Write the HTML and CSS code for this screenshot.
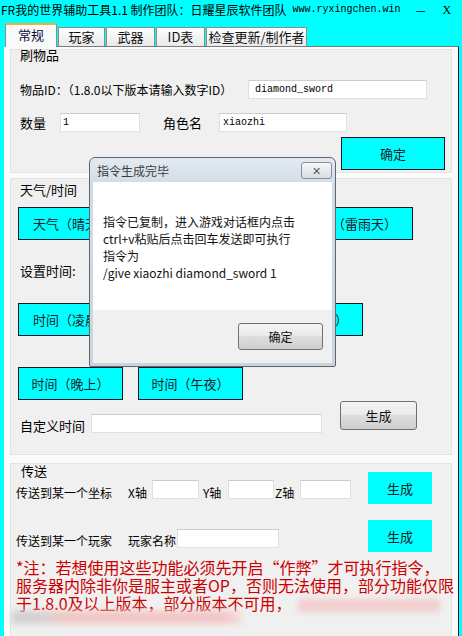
FILE: index.html
```html
<!DOCTYPE html>
<html lang="zh-CN">
<head>
    <meta charset="UTF-8">
    <meta name="viewport" content="width=device-width, initial-scale=1.0">
    <title>FR我的世界辅助工具1.1</title>
    <link rel="stylesheet" href="styles.css">
</head>
<body>
    <div class="titlebar">
        <span class="app-title">FR我的世界辅助工具1.1 制作团队：日耀星辰软件团队</span>
        <span class="site">www.ryxingchen.win</span>
        <span class="win-min">—</span>
        <span class="win-close">X</span>
    </div>

    <div class="tabs">
        <div class="tab active">常规</div>
        <div class="tab tab-player">玩家</div>
        <div class="tab tab-weapon">武器</div>
        <div class="tab tab-id">ID表</div>
        <div class="tab tab-update">检查更新/制作者</div>
    </div>

    <div class="page">
        <!-- 刷物品 -->
        <div class="group group-item">
            <div class="glabel">刷物品</div>
            <div class="row row-id">
                <span class="lbl lbl-id">物品ID：（1.8.0以下版本请输入数字ID）</span>
                <div class="field field-id">diamond_sword</div>
            </div>
            <div class="row row-qty">
                <span class="lbl lbl-qty">数量</span>
                <div class="field field-qty">1</div>
                <span class="lbl lbl-role">角色名</span>
                <div class="field field-role">xiaozhi</div>
            </div>
            <div class="row row-ok">
                <div class="cbtn btn-ok">确定</div>
            </div>
        </div>

        <!-- 天气/时间 (部分按钮被弹窗挡住, 只写出露在外面的字) -->
        <div class="group group-time">
            <div class="glabel glabel-time">天气/时间</div>
            <div class="row row-weather">
                <div class="cbtn btn-w1"><span class="part-left">天气（晴天</span></div>
                <div class="cbtn btn-w2"></div>
                <div class="cbtn btn-w3"><span class="part-right">气（雷雨天）</span></div>
            </div>
            <div class="glabel glabel-set">设置时间:</div>
            <div class="row row-time1">
                <div class="cbtn btn-t"><span class="part-left">时间（凌晨</span></div>
                <div class="cbtn btn-t"></div>
                <div class="cbtn btn-t"><span class="part-right part-paren">）</span></div>
            </div>
            <div class="row row-time2">
                <div class="cbtn btn-t">时间（晚上）</div>
                <div class="cbtn btn-t">时间（午夜）</div>
            </div>
            <div class="row row-custom">
                <div class="custom-left">
                    <span class="lbl lbl-custom">自定义时间</span>
                    <div class="field field-custom"></div>
                </div>
                <div class="gbtn btn-gen">生成</div>
            </div>
        </div>

        <!-- 传送 -->
        <div class="group group-tp">
            <div class="glabel glabel-tp">传送</div>
            <div class="row row-xyz">
                <span class="lbl lbl-tp">传送到某一个坐标</span>
                <span class="lbl lbl-axis">X轴</span>
                <div class="field field-x"></div>
                <span class="lbl lbl-axis lbl-y">Y轴</span>
                <div class="field field-y"></div>
                <span class="lbl lbl-axis lbl-z">Z轴</span>
                <div class="field field-z"></div>
                <div class="fbtn btn-tp1">生成</div>
            </div>
            <div class="row row-player">
                <span class="lbl lbl-tp">传送到某一个玩家</span>
                <span class="lbl lbl-pname">玩家名称</span>
                <div class="field field-pname"></div>
                <div class="fbtn btn-tp2">生成</div>
            </div>
            <div class="note">
                <div class="note-line">*注：若想使用这些功能必须先开启“作弊”才可执行指令，</div>
                <div class="note-line">服务器内除非你是服主或者OP，否则无法使用，部分功能仅限</div>
                <div class="note-line">于1.8.0及以上版本，部分版本不可用，<span class="smudge"></span></div>
                <div class="smudge smudge-2"></div>
            </div>
        </div>
    </div>

    <!-- 弹出的提示框 -->
    <div class="dialog">
        <div class="dlg-title">
            <span>指令生成完毕</span>
            <div class="dlg-close">✕</div>
        </div>
        <div class="dlg-body">
            指令已复制，进入游戏对话框内点击<br>
            ctrl+v粘贴后点击回车发送即可执行<br>
            指令为<br>
            /give xiaozhi diamond_sword 1
        </div>
        <div class="dlg-foot">
            <div class="gbtn btn-dlg">确定</div>
        </div>
    </div>
</body>
</html>
```

FILE: styles.css
```css
* {
    box-sizing: border-box;
}
body {
    margin: 0;
    width: 462px;
    height: 636px;
    overflow: hidden;
    position: relative;
    background: #00ffff;
    font-family: "Noto Sans CJK SC", sans-serif;
    font-size: 12px;
    color: #000;
}

/* title bar */
.titlebar {
    height: 19px;
    display: flex;
    align-items: center;
    white-space: nowrap;
    line-height: 14px;
}
.app-title {
    margin-left: 1px;
}
.site {
    margin-left: 6px;
    font-family: "Liberation Mono", monospace;
    font-size: 10px;
}
.win-min {
    margin-left: 15px;
    font-size: 11px;
}
.win-close {
    margin-left: 17px;
    font-family: "Liberation Serif", serif;
    font-size: 12px;
}

/* tabs */
.tabs {
    height: 27px;
    display: flex;
    align-items: flex-end;
    padding-left: 5px;
}
.tab {
    height: 19px;
    line-height: 18px;
    text-align: center;
    border: 1px solid #8c8c8c;
    border-bottom: none;
    background: linear-gradient(#fefefe, #e9e9e9);
    margin-left: 1px;
    font-size: 13px;
    color: #111;
}
.tab.active {
    width: 52px;
    height: 24px;
    margin-left: 0;
    margin-bottom: -1px;
    line-height: 20px;
    border-top: 2px solid #f6ad3a;
    background: #f9f9f9;
    color: #0a0a40;
    position: relative;
    z-index: 1;
}
.tab-player { width: 47px; }
.tab-weapon { width: 49px; }
.tab-id { width: 49px; }
.tab-update { width: 101px; }

/* page */
.page {
    height: 590px;
    margin-left: 4px;
    width: 455px;
    border-top: 1px solid #7a7a7a;
    border-left: 1px solid #ffffff;
    border-right: 1px solid #1a1a1a;
    background: #fbfbfb;
    padding: 2px 6px 0 5px;
}
.group {
    background: #f0f0f0;
    border: 1px solid #e3e3e3;
}
.group-item {
    height: 124px;
}
.group-time {
    height: 277px;
    margin-top: 5px;
}
.group-tp {
    height: 180px;
    margin-top: 8px;
}
.glabel {
    height: 14px;
    line-height: 14px;
    margin-left: 9px;
    font-size: 13px;
}
.group-item .glabel {
    margin-top: -2px;
}
.glabel-time {
    margin-top: 4px;
}
.glabel-set {
    margin-top: 24px;
}
.glabel-tp {
    margin-left: 10px;
}

.row {
    display: flex;
    align-items: center;
}
.lbl {
    white-space: nowrap;
}
.field {
    height: 19px;
    background: #fff;
    border: 1px solid #e0e0e0;
    border-top-color: #cdcdcd;
    font-family: "Liberation Mono", monospace;
    font-size: 10px;
    line-height: 17px;
    padding-left: 5px;
}

/* 刷物品 */
.row-id {
    margin-top: 18px;
    padding-left: 9px;
}
.lbl-id { width: 228px; }
.field-id { width: 179px; padding-left: 6px; }
.row-qty {
    margin-top: 14px;
    padding-left: 9px;
}
.lbl-qty { width: 40px; font-size: 13px; }
.field-qty { width: 80px; padding-left: 2px; }
.lbl-role { width: 56px; margin-left: 23px; font-size: 13px; }
.field-role { width: 128px; padding-left: 3px; }
.row-ok {
    margin-top: 5px;
    justify-content: flex-end;
    padding-right: 6px;
}

/* cyan buttons */
.cbtn {
    height: 33px;
    background: #00ffff;
    border: 1px solid #14142a;
    display: flex;
    align-items: center;
    justify-content: center;
    font-size: 13px;
    color: #1a1a2a;
    white-space: nowrap;
}
.part-left {
    margin-right: auto;
    margin-left: 14px;
}
.part-right {
    margin-left: auto;
    margin-right: 15px;
}
.part-paren {
    margin-right: 14px;
}
.btn-ok { width: 104px; }
.row-weather {
    margin-top: 10px;
    padding-left: 7px;
}
.btn-w1 { width: 102px; }
.btn-w2 { width: 102px; margin-left: 38px; }
.btn-w3 { width: 117px; margin-left: 36px; }
.row-time1 {
    margin-top: 25px;
    padding-left: 7px;
}
.row-time2 {
    margin-top: 31px;
    padding-left: 7px;
}
.btn-t { width: 105px; margin-right: 15px; }

.row-custom {
    margin-top: 1px;
    height: 35px;
    align-items: flex-start;
    padding-left: 9px;
}
.custom-left {
    align-self: flex-end;
    display: flex;
    align-items: center;
    margin-bottom: 1px;
}
.lbl-custom { width: 71px; font-size: 13px; padding-top: 4px; }
.field-custom { width: 231px; }

/* grey buttons */
.gbtn {
    height: 29px;
    border: 1px solid #707070;
    border-radius: 3px;
    background: linear-gradient(#f3f3f3 0, #ebebeb 45%, #dddddd 50%, #cfcfcf 100%);
    display: flex;
    align-items: center;
    justify-content: center;
    font-size: 13px;
    color: #111;
}
.btn-gen {
    width: 77px;
    margin-left: 18px;
}

/* 传送 */
.row-xyz {
    margin-top: -6px;
    height: 32px;
    padding-left: 5px;
}
.row-xyz .lbl {
    margin-top: 8px;
}
.row-xyz .field {
    margin-top: 3px;
}
.lbl-tp { width: 112px; font-size: 12px; }
.lbl-axis { width: 24px; }
.lbl-y { width: 25px; margin-left: 4px; }
.lbl-z { width: 25px; margin-left: 1px; }
.field-x { width: 47px; }
.field-y { width: 46px; }
.field-z { width: 51px; }
.fbtn {
    width: 64px;
    height: 32px;
    background: #00ffff;
    display: flex;
    align-items: center;
    justify-content: center;
    font-size: 13px;
    color: #1a1a2a;
}
.btn-tp1 { margin-left: 17px; }
.row-player {
    margin-top: 16px;
    height: 32px;
    padding-left: 5px;
}
.row-player .lbl {
    margin-top: 8px;
}
.lbl-pname { width: 49px; }
.field-pname { width: 102px; margin-top: 4px; }
.btn-tp2 { margin-left: 89px; }

.note {
    margin-top: 6px;
    padding-left: 5px;
    font-size: 16px;
    color: #cc0000;
    white-space: nowrap;
}
.note-line {
    height: 18px;
    line-height: 18px;
}
.smudge {
    display: inline-block;
    width: 142px;
    height: 13px;
    margin-left: 6px;
    vertical-align: middle;
    background: #f3cdcd;
    filter: blur(3px);
}
.smudge-2 {
    display: block;
    width: 231px;
    height: 13px;
    margin: -1px 0 0 -4px;
    background: linear-gradient(to right, #cfcfcf 0, #d8d0d0 14%, #f2c6c6 22%, #f2c6c6 92%, #f6e0e0 100%);
}

/* dialog */
.dialog {
    position: absolute;
    left: 89px;
    top: 157px;
    width: 247px;
    height: 210px;
    border: 1px solid #5e6670;
    border-radius: 6px 6px 2px 2px;
    background: linear-gradient(#e2eaf2 0, #d3dce6 26px, #cdd3da 100%);
    padding: 0 3px 3px;
    display: flex;
    flex-direction: column;
}
.dlg-title {
    height: 24px;
    flex: none;
    display: flex;
    align-items: center;
    justify-content: space-between;
    padding-left: 4px;
    color: #3b3b3b;
}
.dlg-close {
    width: 31px;
    height: 17px;
    border: 1px solid #8a9099;
    border-radius: 3px;
    background: linear-gradient(#f7f8f9, #d9dde2);
    display: flex;
    align-items: center;
    justify-content: center;
    font-size: 11px;
    color: #55595f;
}
.dlg-body {
    height: 128px;
    flex: none;
    background: #fff;
    padding: 31px 0 0 10px;
    line-height: 17px;
    color: #111;
    white-space: nowrap;
}
.dlg-foot {
    flex: 1;
    background: #f0f0f0;
    display: flex;
    align-items: center;
    justify-content: flex-end;
    padding-right: 9px;
}
.btn-dlg {
    width: 85px;
    height: 27px;
    font-size: 12px;
}
```
